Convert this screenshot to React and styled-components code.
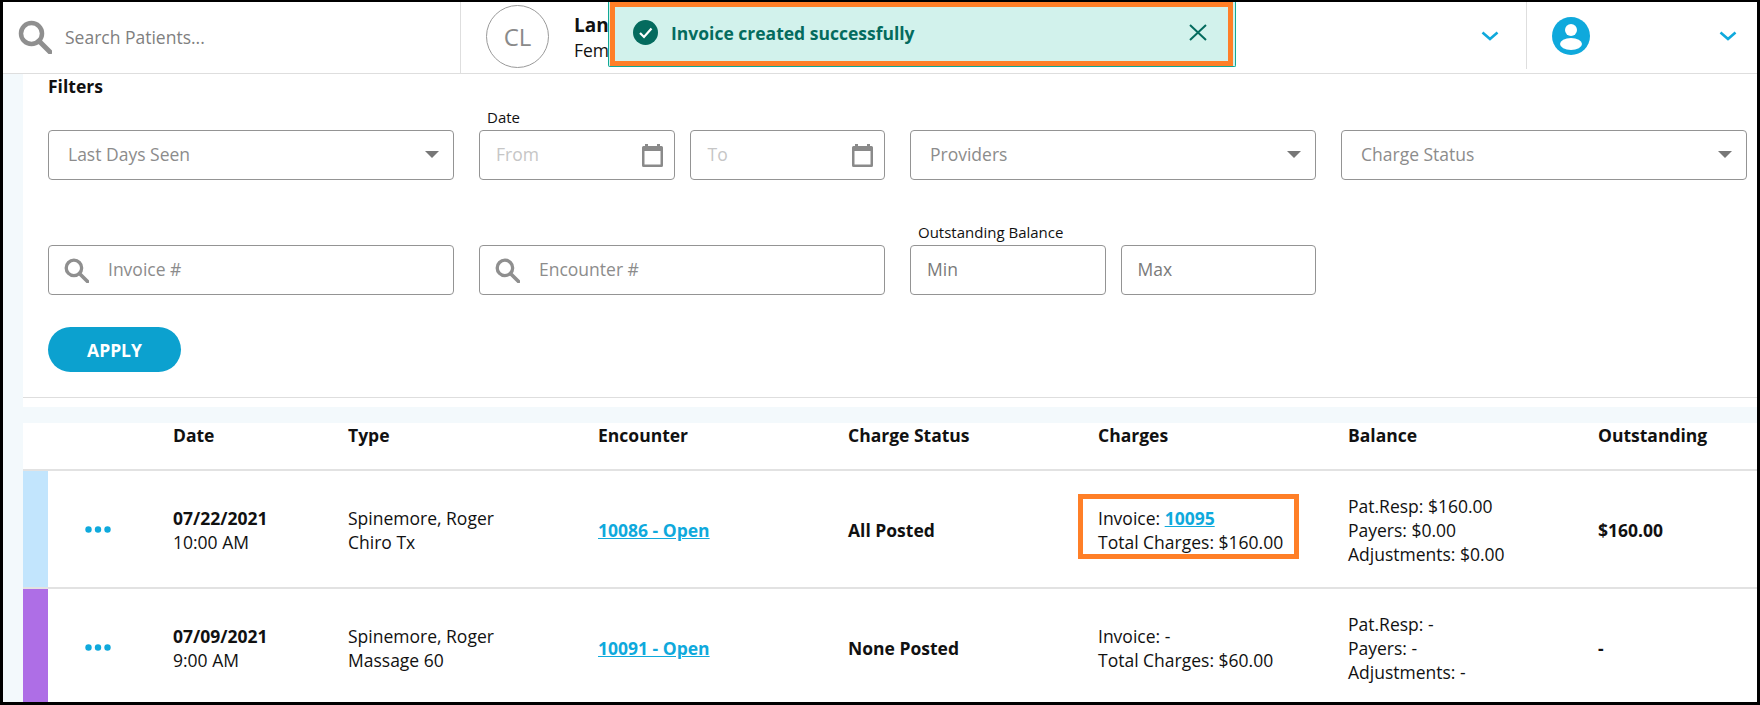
import styled, { createGlobalStyle } from "styled-components";

const GlobalStyle = createGlobalStyle`
  html, body {
    margin: 0;
    padding: 0;
    background: #fff;
    font-family: "Open Sans", "Liberation Sans", sans-serif;
    color: #111;
  }
  * { box-sizing: border-box; }
`;

const Frame = styled.div`
  position: relative;
  width: 1760px;
  height: 705px;
  border: solid #000;
  border-width: 2px 3px 3px 3px;
  overflow: hidden;
  background: #fff;
`;

const Header = styled.header`
  display: flex;
  height: 72px;
  border-bottom: 1px solid #dedede;
`;

const SearchCell = styled.div`
  width: 458px;
  display: flex;
  align-items: center;
  gap: 13px;
  padding: 0 0 2px 15px;
  border-right: 1px solid #dedede;
`;

const SearchText = styled.span`
  font-size: 17.5px;
  color: #808080;
`;

const PatientCell = styled.div`
  flex: 1;
  display: flex;
  align-items: center;
  padding: 0 27px 2px 25px;
`;

const Avatar = styled.div`
  width: 63px;
  height: 63px;
  border-radius: 50%;
  border: 1px solid #9a9a9a;
  display: flex;
  align-items: center;
  justify-content: center;
  font-size: 24px;
  color: #8a8a8a;
`;

const PatientInfo = styled.div`
  margin-left: 25px;
  flex: 1;
`;

const PatientName = styled.div`
  font-size: 19px;
  font-weight: 700;
  line-height: 26px;
`;

const PatientMeta = styled.div`
  font-size: 17.5px;
  line-height: 24px;
`;

const ChevronSlot = styled.span`
  display: flex;
  margin-bottom: 2px;
`;

const UserCell = styled.div`
  width: 231px;
  height: 67px;
  display: flex;
  align-items: center;
  justify-content: space-between;
  padding: 0 20px 0 25px;
  border-left: 1px solid #dedede;
`;

const Toast = styled.div`
  position: absolute;
  left: 605px;
  top: 0;
  width: 628px;
  height: 65px;
  padding: 0 2px 0 1px;
  background: #d2f2ec;
  border: solid #10a895;
  border-width: 0 1px 1px 1px;
  border-radius: 0 0 2px 2px;
`;

const ToastCallout = styled.div`
  height: 100%;
  display: flex;
  align-items: center;
  padding: 0 21px 3px 18px;
  border: 5px solid #ff7f27;
`;

const ToastText = styled.span`
  flex: 1;
  margin-left: 13px;
  font-size: 17.5px;
  font-weight: 700;
  color: #046b5e;
`;

const Body = styled.div`
  display: flex;
`;

const Gutter = styled.div`
  width: 20px;
  height: 630px;
  background: #f3f9fc;
`;

const Content = styled.main`
  flex: 1;
  min-width: 0;
`;

const Filters = styled.section`
  padding: 0 10px 0 25px;
`;

const FiltersTitle = styled.div`
  font-size: 17.5px;
  font-weight: 700;
  line-height: 24px;
`;

const FilterGrid = styled.div`
  display: grid;
  grid-template-columns: repeat(4, 406px);
  grid-template-rows: 82px 115px;
  column-gap: 25px;
`;

const Field = styled.div`
  display: flex;
  flex-direction: column;
  justify-content: flex-end;
`;

const FieldLabel = styled.label`
  font-size: 15px;
  line-height: 18px;
  margin: 0 0 4px 8px;
`;

const FieldPair = styled.div`
  display: grid;
  grid-template-columns: 1fr 1fr;
  column-gap: 15px;
`;

const InputBox = styled.div`
  height: 50px;
  border: 1px solid #949494;
  border-radius: 4px;
  display: flex;
  align-items: center;
  justify-content: space-between;
  padding: 0 ${(props) => (props.$pad ? props.$pad : 14)}px 0 ${(props) => (props.$left ? props.$left : 18)}px;
  background: #fff;
`;

const BoxText = styled.span`
  font-size: 17.5px;
  line-height: 24px;
  margin-bottom: 2px;
  color: ${(props) => props.$color || "#8c8c8c"};
  flex: ${(props) => (props.$grow ? 1 : "none")};
  margin-left: ${(props) => props.$offset || 0}px;
`;

const Caret = styled.span`
  width: 0;
  height: 0;
  margin-bottom: 2px;
  border-left: 7px solid transparent;
  border-right: 7px solid transparent;
  border-top: 7px solid #777;
`;

const ApplyButton = styled.button`
  display: block;
  width: 133px;
  height: 45px;
  margin-top: 32px;
  border: none;
  border-radius: 23px;
  background: #0ca1cf;
  color: #fff;
  font-family: inherit;
  font-size: 17.5px;
  font-weight: 700;
`;

const Rule = styled.div`
  height: 1px;
  margin-top: 25px;
  background: #dedede;
`;

const Band = styled.div`
  height: 16px;
  margin-top: 9px;
  background: #f3f9fc;
`;

const Columns = "25px 125px 175px 250px 250px 250px 250px 250px 1fr";

const TableHead = styled.div`
  display: grid;
  grid-template-columns: ${Columns};
  height: 48px;
  padding-top: 1px;
  border-bottom: 2px solid #e2e2e2;
  font-size: 17.5px;
  font-weight: 700;
  line-height: 22px;
`;

const Row = styled.div`
  display: grid;
  grid-template-columns: ${Columns};
  height: 118px;
  border-bottom: 2px solid #e2e2e2;
  align-items: center;
  font-size: 17.5px;
  line-height: 24px;
`;

const ColorBar = styled.div`
  align-self: stretch;
  background: ${(props) => props.$color};
`;

const ActionCell = styled.div`
  padding-left: 37px;
  display: flex;
`;

const Cell = styled.div`
  margin-top: 2px;
  white-space: nowrap;
  font-weight: ${(props) => (props.$bold ? 700 : 400)};
`;

const Strong = styled.div`
  font-weight: 700;
`;

const EncounterLink = styled.a`
  color: #0fa9dc;
  font-weight: 700;
  text-decoration: underline;
`;

const Highlight = styled.div`
  width: 221px;
  margin: 0 0 5px -20px;
  padding: 7px 0 0 15px;
  border: 5px solid #ff7f27;
  white-space: nowrap;
`;

const SearchIcon = ({ size }) => (
  <svg width={size} height={size} viewBox="0 0 34 34" fill="none" stroke="#8f8f8f">
    <circle cx="13.5" cy="13.5" r="10.5" strokeWidth="4.5" />
    <path d="M21 21 L32 32" strokeWidth="5" strokeLinecap="round" />
  </svg>
);

const CalendarIcon = () => (
  <svg width="21" height="23" viewBox="0 0 21 23">
    <path fill="#8a8a8a" d="M3 0h3v2h9V0h3v2h1.500A1.500 1.500 0 0 1 21 3.500v18A1.500 1.500 0 0 1 19.500 23h-18A1.500 1.500 0 0 1 0 21.500v-18A1.500 1.500 0 0 1 1.500 2H3z" />
    <rect x="2.500" y="7" width="16" height="13.500" fill="#fff" />
  </svg>
);

const Chevron = () => (
  <svg width="18" height="10" viewBox="0 0 18 10" fill="none">
    <path d="M1.500 1.500 L9 8 L16.500 1.500" stroke="#0fa9dc" strokeWidth="2.600" />
  </svg>
);

const UserIcon = () => (
  <svg width="38" height="38" viewBox="0 0 38 38">
    <circle cx="19" cy="19" r="19" fill="#0fa9dc" />
    <circle cx="19" cy="13" r="6" fill="#fff" />
    <ellipse cx="19" cy="27" rx="11" ry="6" fill="#fff" />
  </svg>
);

const CheckIcon = () => (
  <svg width="25" height="25" viewBox="0 0 25 25">
    <circle cx="12.500" cy="12.500" r="12.500" fill="#046b5e" />
    <path d="M7 13 L11 17 L18.500 8.500" fill="none" stroke="#fff" strokeWidth="2.200" />
  </svg>
);

const CloseIcon = () => (
  <svg width="18" height="17" viewBox="0 0 18 17">
    <path d="M1 1 L17 16 M17 1 L1 16" stroke="#046b5e" strokeWidth="2" />
  </svg>
);

const DotsIcon = () => (
  <svg width="26" height="7" viewBox="0 0 26 7" fill="#0fa9dc">
    <circle cx="3.500" cy="3.500" r="3.200" />
    <circle cx="13" cy="3.500" r="3.200" />
    <circle cx="22.500" cy="3.500" r="3.200" />
  </svg>
);

const rows = [
  {
    color: "#c2e5fd",
    date: "07/22/2021",
    time: "10:00 AM",
    provider: "Spinemore, Roger",
    visit: "Chiro Tx",
    encounter: "10086 - Open",
    status: "All Posted",
    invoice: "10095",
    total: "$160.00",
    balance: ["Pat.Resp: $160.00", "Payers: $0.00", "Adjustments: $0.00"],
    outstanding: "$160.00",
  },
  {
    color: "#ae6ee6",
    date: "07/09/2021",
    time: "9:00 AM",
    provider: "Spinemore, Roger",
    visit: "Massage 60",
    encounter: "10091 - Open",
    status: "None Posted",
    invoice: null,
    total: "$60.00",
    balance: ["Pat.Resp: -", "Payers: -", "Adjustments: -"],
    outstanding: "-",
  },
];

const App = () => {
  return (
    <Frame>
      <GlobalStyle />
      <Header>
        <SearchCell>
          <SearchIcon size={34} />
          <SearchText>Search Patients...</SearchText>
        </SearchCell>
        <PatientCell>
          <Avatar>CL</Avatar>
          <PatientInfo>
            <PatientName>Lan</PatientName>
            <PatientMeta>Fem</PatientMeta>
          </PatientInfo>
          <ChevronSlot>
            <Chevron />
          </ChevronSlot>
        </PatientCell>
        <UserCell>
          <UserIcon />
          <Chevron />
        </UserCell>
      </Header>

      <Toast>
        <ToastCallout>
          <CheckIcon />
          <ToastText>Invoice created successfully</ToastText>
          <CloseIcon />
        </ToastCallout>
      </Toast>

      <Body>
        <Gutter />
        <Content>
          <Filters>
            <FiltersTitle>Filters</FiltersTitle>
            <FilterGrid>
              <Field>
                <InputBox $left={19}>
                  <BoxText>Last Days Seen</BoxText>
                  <Caret />
                </InputBox>
              </Field>
              <Field>
                <FieldLabel>Date</FieldLabel>
                <FieldPair>
                  <InputBox $pad={11} $left={16}>
                    <BoxText $color="#c6c6c6">From</BoxText>
                    <CalendarIcon />
                  </InputBox>
                  <InputBox $pad={11} $left={17}>
                    <BoxText $color="#c6c6c6">To</BoxText>
                    <CalendarIcon />
                  </InputBox>
                </FieldPair>
              </Field>
              <Field>
                <InputBox $left={19}>
                  <BoxText>Providers</BoxText>
                  <Caret />
                </InputBox>
              </Field>
              <Field>
                <InputBox $left={19}>
                  <BoxText>Charge Status</BoxText>
                  <Caret />
                </InputBox>
              </Field>
              <Field>
                <InputBox $left={15}>
                  <SearchIcon size={25} />
                  <BoxText $grow $offset={19}>Invoice #</BoxText>
                </InputBox>
              </Field>
              <Field>
                <InputBox $left={15}>
                  <SearchIcon size={25} />
                  <BoxText $grow $offset={19}>Encounter #</BoxText>
                </InputBox>
              </Field>
              <Field>
                <FieldLabel>Outstanding Balance</FieldLabel>
                <FieldPair>
                  <InputBox $left={16}>
                    <BoxText $color="#7a7a7a">Min</BoxText>
                  </InputBox>
                  <InputBox $left={16}>
                    <BoxText $color="#7a7a7a">Max</BoxText>
                  </InputBox>
                </FieldPair>
              </Field>
            </FilterGrid>
            <ApplyButton>APPLY</ApplyButton>
          </Filters>
          <Rule />
          <Band />
          <TableHead>
            <div />
            <div />
            <div>Date</div>
            <div>Type</div>
            <div>Encounter</div>
            <div>Charge Status</div>
            <div>Charges</div>
            <div>Balance</div>
            <div>Outstanding</div>
          </TableHead>
          {rows.map((row) => (
            <Row key={row.encounter}>
              <ColorBar $color={row.color} />
              <ActionCell>
                <DotsIcon />
              </ActionCell>
              <Cell>
                <Strong>{row.date}</Strong>
                <div>{row.time}</div>
              </Cell>
              <Cell>
                <div>{row.provider}</div>
                <div>{row.visit}</div>
              </Cell>
              <Cell>
                <EncounterLink>{row.encounter}</EncounterLink>
              </Cell>
              <Cell $bold>{row.status}</Cell>
              {row.invoice ? (
                <Highlight>
                  <div>
                    Invoice: <EncounterLink>{row.invoice}</EncounterLink>
                  </div>
                  <div>Total Charges: {row.total}</div>
                </Highlight>
              ) : (
                <Cell>
                  <div>Invoice: -</div>
                  <div>Total Charges: {row.total}</div>
                </Cell>
              )}
              <Cell>
                {row.balance.map((line) => (
                  <div key={line}>{line}</div>
                ))}
              </Cell>
              <Cell $bold>{row.outstanding}</Cell>
            </Row>
          ))}
        </Content>
      </Body>
    </Frame>
  );
};

export default App;
